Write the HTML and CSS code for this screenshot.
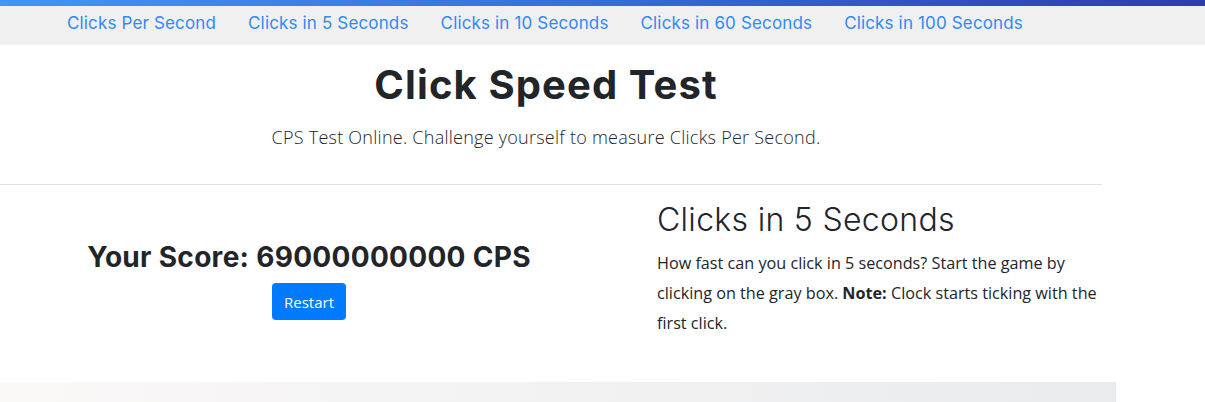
FILE: index.html
```html
<!DOCTYPE html>
<html lang="en">
<head>
<meta charset="utf-8">
<title>Click Speed Test</title>
<link rel="stylesheet" href="styles.css">
</head>
<body>
<div class="topbar"></div>
<nav class="nav">
  <a href="#">Clicks Per Second</a>
  <a href="#">Clicks in 5 Seconds</a>
  <a href="#">Clicks in 10 Seconds</a>
  <a href="#">Clicks in 60 Seconds</a>
  <a href="#">Clicks in 100 Seconds</a>
</nav>
<main class="main">
  <header class="hero">
    <h1 class="title">Click Speed Test</h1>
    <p class="lead">CPS Test Online. Challenge yourself to measure Clicks Per Second.</p>
  </header>
  <section class="row">
    <div class="col-left">
      <h2 class="score">Your Score: 69000000000 CPS</h2>
      <button class="btn">Restart</button>
    </div>
    <div class="col-right">
      <h3 class="subtitle">Clicks in 5 Seconds</h3>
      <p class="text">How fast can you click in 5 seconds? Start the game by clicking on the gray box. <b>Note:</b> Clock starts ticking with the first click.</p>
    </div>
  </section>
</main>
<div class="band"></div>
</body>
</html>
```
FILE: styles.css
```css
html, body {
  margin: 0;
  padding: 0;
  background: #fff;
  overflow: hidden;
}
body {
  font-family: "Open Sans", "Liberation Sans", Arial, sans-serif;
  color: #212529;
}
.topbar {
  height: 6px;
  background: linear-gradient(90deg, #3d97f6 0%, #3a75e0 40%, #2f3bb3 100%);
}
.nav {
  height: 39px;
  box-sizing: border-box;
  background: #f0f0f0;
  display: flex;
  align-items: center;
  gap: 32px;
  padding-left: 67px;
  padding-bottom: 6px;
}
.nav a {
  font-family: Inter, "Open Sans", sans-serif;
  font-size: 17px;
  line-height: 22px;
  letter-spacing: 0.15px;
  font-weight: 400;
  color: #3089f7;
  text-decoration: none;
}
.main {
  width: 1102px;
}
.hero {
  text-align: center;
  border-bottom: 1px solid #e1e1e1;
  padding: 17px 10px 34px 0;
}
.title {
  font-family: Inter, "Open Sans", sans-serif;
  font-weight: 700;
  font-size: 40px;
  line-height: 46px;
  letter-spacing: 1.1px;
  margin: 0 0 16px 0;
}
.lead {
  font-family: "Open Sans", sans-serif;
  font-weight: 300;
  font-size: 18px;
  line-height: 26px;
  letter-spacing: 0.25px;
  margin: 0;
}
.row {
  display: grid;
  grid-template-columns: 618px 1fr;
}
.col-left {
  display: flex;
  flex-direction: column;
  align-items: center;
  padding-top: 56px;
}
.score {
  font-family: Inter, "Open Sans", sans-serif;
  font-weight: 700;
  font-size: 28px;
  line-height: 32px;
  letter-spacing: 0.3px;
  margin: 0 0 10px 0;
}
.btn {
  font-family: "Open Sans", sans-serif;
  font-size: 15px;
  color: #fff;
  background: #007bff;
  border: none;
  border-radius: 4px;
  width: 74px;
  height: 37px;
  padding: 0;
}
.col-right {
  padding-left: 39px;
  padding-top: 15px;
}
.subtitle {
  font-family: Inter, "Open Sans", sans-serif;
  font-weight: 300;
  font-size: 32px;
  line-height: 40px;
  letter-spacing: 0.3px;
  margin: 0 0 8px 0;
}
.text {
  font-family: "Open Sans", sans-serif;
  font-size: 16.2px;
  line-height: 30px;
  margin: 0;
  color: #212529;
}
.text b {
  font-weight: 700;
}
.band {
  margin-top: 44px;
  width: 1116px;
  height: 40px;
  background: linear-gradient(90deg, #fbf8f8 0%, #f2f2f2 50%, #eaebee 100%);
}
```
